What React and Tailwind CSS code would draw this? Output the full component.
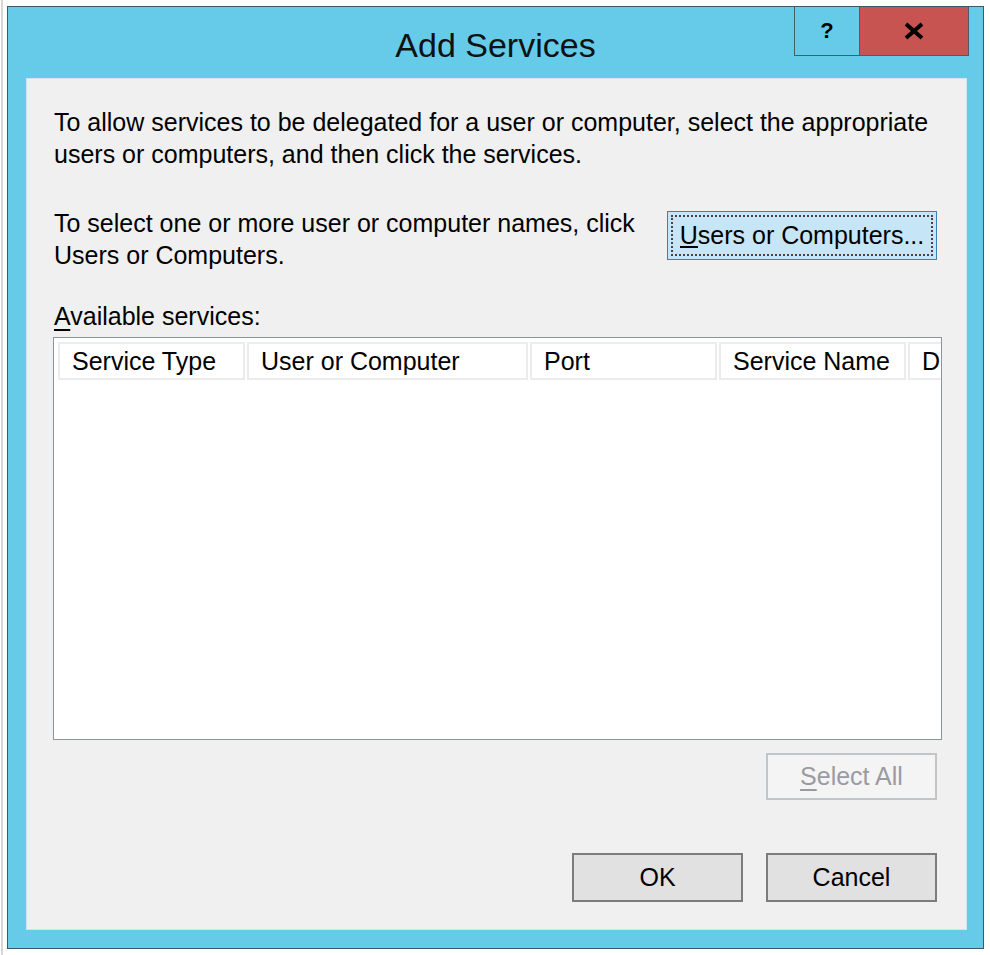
import React from "react";

const font = { fontFamily: '"Liberation Sans", Arial, sans-serif' };

const columns = [
  { label: "Service Type", width: "w-[187px]" },
  { label: "User or Computer", width: "w-[281px]" },
  { label: "Port", width: "w-[187px]" },
  { label: "Service Name", width: "w-[187px]" },
  { label: "D", width: "w-[60px]" },
];

const CloseGlyph = () => (
  <svg width="22" height="18" viewBox="0 0 22 18">
    <path d="M3 2 L19 16 M19 2 L3 16" stroke="#000" strokeWidth="4" strokeLinecap="butt" />
  </svg>
);

const App = () => {
  return (
    <div className="w-[990px] h-[955px] bg-white flex" style={font}>
      <div className="w-[1px]" />
      <div className="w-[2px] h-full bg-[#d6d6d6]" />
      <div className="w-[4px]" />

      {/* Dialog window */}
      <div className="mt-[6px] w-[977px] h-[943px] border border-[#3e5966] bg-[#65cbe9] flex flex-col">
        {/* Title bar */}
        <div className="relative h-[71px] flex items-center justify-center">
          <span className="text-[34px] leading-none text-[#111] mt-[5px]">Add Services</span>
          <div className="absolute top-0 right-[14px] flex">
            <div className="w-[65px] h-[49px] border border-t-0 border-r-0 border-[#4a5d66] bg-[#65cbe9] flex items-center justify-center">
              <span className="text-[22px] font-bold text-black leading-none">?</span>
            </div>
            <div className="w-[110px] h-[49px] border border-t-0 border-[#4a5d66] bg-[#c75450] flex items-center justify-center">
              <CloseGlyph />
            </div>
          </div>
        </div>

        {/* Client area */}
        <div className="ml-[18px] w-[941px] h-[852px] bg-[#f0f0f0] border border-[#d3e3ea] pl-[27px] pr-[29px] pt-[27px] text-[25px] leading-[32px] text-black">
          <p>
            To allow services to be delegated for a user or computer, select the appropriate users or computers, and then click the services.
          </p>

          <div className="flex justify-between mt-[37px]">
            <p className="w-[600px]">
              To select one or more user or computer names, click Users or Computers.
            </p>
            <button className="mt-[4px] w-[270px] h-[49px] bg-[#c6e5f7] border border-[#3d80b3] p-[3px]">
              <span className="flex items-center justify-center w-full h-full border-2 border-dotted border-[#5a3a3a] text-[25px] leading-none">
                <u className="no-underline border-b-2 border-black leading-[22px]">U</u>sers or Computers...
              </span>
            </button>
          </div>

          <p className="mt-[29px]">
            <span className="underline underline-offset-[4px]">A</span>vailable services:
          </p>

          {/* List view */}
          <div className="mt-[5px] -ml-px w-[889px] h-[403px] bg-white border border-[#8f949a] overflow-hidden">
            <div className="flex mt-[4px] ml-[4px] gap-[2px] h-[38px]">
              {columns.map((c) => (
                <div
                  key={c.label}
                  className={`${c.width} shrink-0 h-full border-2 border-[#ececec] flex items-center pl-[12px] whitespace-nowrap text-[25px] leading-none`}
                >
                  {c.label}
                </div>
              ))}
            </div>
          </div>

          <div className="flex justify-end mt-[13px]">
            <button className="w-[171px] h-[47px] bg-[#f4f4f4] border-2 border-[#c2c5c8] text-[#9a9ba2] text-[25px] leading-none">
              <span className="underline underline-offset-[4px]">S</span>elect All
            </button>
          </div>

          <div className="flex justify-end gap-[23px] mt-[53px]">
            <button className="w-[171px] h-[49px] bg-[#e1e1e1] border-2 border-[#7c7c7c] text-[25px] leading-none">
              OK
            </button>
            <button className="w-[171px] h-[49px] bg-[#e1e1e1] border-2 border-[#7c7c7c] text-[25px] leading-none">
              Cancel
            </button>
          </div>
        </div>
      </div>
    </div>
  );
};

export default App;
